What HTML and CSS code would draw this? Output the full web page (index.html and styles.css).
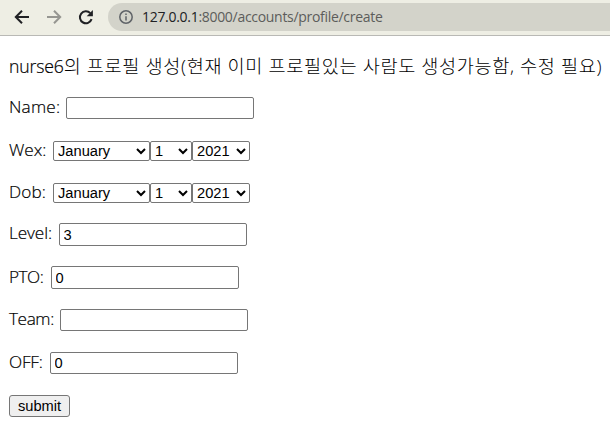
FILE: index.html
```html
<!DOCTYPE html>
<html lang="ko">
<head>
<meta charset="utf-8">
<title>profile</title>
<link rel="stylesheet" href="styles.css">
</head>
<body>
<header class="toolbar">
  <svg class="nav" viewBox="0 0 16 16"><path d="M15 8H2.5M8 1.8 1.8 8 8 14.2"/></svg>
  <svg class="nav forward" viewBox="0 0 16 16"><path d="M1 8h12.5M8 1.8 14.2 8 8 14.2"/></svg>
  <svg class="nav" viewBox="0 0 16 16"><path d="M13.6 10.2A6 6 0 1 1 12.3 4.1"/><path class="solid" d="M14.9 1v6.2H8.7z"/></svg>
  <div class="address">
    <svg class="info" viewBox="0 0 14 14"><circle cx="7" cy="7" r="6.2"/><path d="M7 6.2v4.2M7 3.5v1.5"/></svg>
    <span class="url"><span class="host">127.0.0.1</span>:8000/accounts/profile/create</span>
  </div>
</header>
<main>
  <p class="title"><span class="user">nurse6</span>의 프로필 생성(현재 이미 프로필있는 사람도 생성가능함, 수정 필요)</p>
  <form>
    <div class="row"><label class="name">Name:</label><input type="text"></div>
    <div class="row date"><label class="wex">Wex:</label><select class="month"><option>January</option></select><select class="day"><option>1</option></select><select class="year"><option>2021</option></select></div>
    <div class="row date"><label class="dob">Dob:</label><select class="month"><option>January</option></select><select class="day"><option>1</option></select><select class="year"><option>2021</option></select></div>
    <div class="row tall"><label class="level">Level:</label><input type="text" value="3"></div>
    <div class="row tall"><label class="pto">PTO:</label><input type="text" value="0"></div>
    <div class="row"><label class="team">Team:</label><input type="text"></div>
    <div class="row"><label class="off">OFF:</label><input type="text" value="0"></div>
    <button type="button">submit</button>
  </form>
</main>
</body>
</html>
```
FILE: styles.css
```css
* { box-sizing: border-box; }
body { margin: 0; background: #fff; color: #000; font-family: "Open Sans", "Noto Sans CJK KR", sans-serif; overflow: hidden; }
.toolbar { display: flex; align-items: center; height: 36px; padding: 0 0 2px 14px; background: #eeeee4; border-bottom: 1px solid #b9b9b5; }
.nav { flex: none; width: 16px; height: 16px; margin-right: 16px; fill: none; stroke: #202124; stroke-width: 2; }
.nav .solid { fill: #202124; stroke: none; }
.forward { stroke: #969691; }
.address { display: flex; align-items: center; flex: 1; height: 28px; margin: 1px 0 0 -2px; padding-left: 11px; background: #d3d3ca; border-radius: 14px 0 0 14px; }
.info { width: 14px; height: 14px; margin-right: 9px; fill: none; stroke: #5f6368; stroke-width: 1.5; }
.url { font-size: 14px; line-height: 20px; letter-spacing: -0.3px; color: #5c5d5b; white-space: nowrap; }
.host { color: #202124; }
main { padding: 16px 0 0 9px; }
.title { margin: 0; height: 27px; line-height: 27px; font-size: 18.6px; letter-spacing: 0.63px; font-weight: 300; white-space: nowrap; }
.user { font-size: 17.6px; letter-spacing: -0.15px; -webkit-text-stroke: 0.2px #000; }
form { padding-top: 18px; }
.row { display: flex; align-items: center; height: 22px; margin-bottom: 21px; }
.date { height: 20px; margin: 22px 0; }
.date + .date { margin-bottom: 20px; }
.tall { height: 23px; margin-bottom: 20px; }
.tall input { height: 23px; }
.row label { flex: none; font-size: 17.2px; font-weight: 300; -webkit-text-stroke: 0.2px #000; line-height: 22px; padding-bottom: 2px; white-space: nowrap; }
.row .name { width: 57px; letter-spacing: 0.2px; }
.row .wex { width: 44px; padding-bottom: 3px; }
.row .dob { width: 44px; letter-spacing: 0.1px; }
.row .level { width: 50px; letter-spacing: -0.1px; padding-bottom: 3px; }
.row .pto { width: 42px; letter-spacing: -0.5px; }
.row .team { width: 51px; letter-spacing: -0.4px; }
.row .off { width: 41px; letter-spacing: -0.2px; }
input, select, button { margin: 0; font: 14.67px "Liberation Sans", sans-serif; color: #000; border: 1px solid #767676; border-radius: 2px; }
input { width: 188px; height: 22px; padding: 1px 3.5px; background: #fff; }
select { height: 20px; padding: 0; background: #fff; }
.month { width: 97px; }
.day { width: 42px; }
.year { width: 58px; }
button { display: block; width: 61px; height: 22px; padding: 0; background: #efefef; border-radius: 3px; }
```
